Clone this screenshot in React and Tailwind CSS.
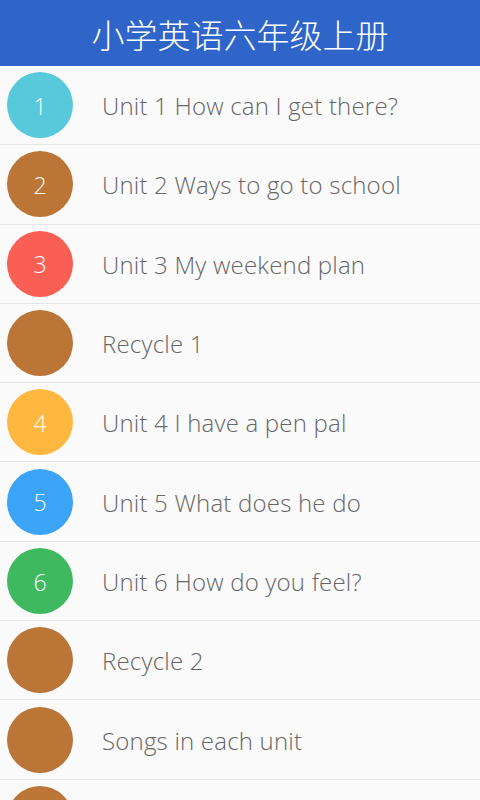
import React from "react";

const items = [
  { n: "1", t: "Unit 1 How can I get there?", c: "bg-[#57c9da]" },
  { n: "2", t: "Unit 2 Ways to go to school", c: "bg-[#bb7536]" },
  { n: "3", t: "Unit 3 My weekend plan", c: "bg-[#fa5f55]" },
  { n: "", t: "Recycle 1", c: "bg-[#bb7536]" },
  { n: "4", t: "Unit 4 I have a pen pal", c: "bg-[#feb840]" },
  { n: "5", t: "Unit 5 What does he do", c: "bg-[#3ca4f6]" },
  { n: "6", t: "Unit 6 How do you feel?", c: "bg-[#3fb95f]" },
  { n: "", t: "Recycle 2", c: "bg-[#bb7536]" },
  { n: "", t: "Songs in each unit", c: "bg-[#bb7536]" },
  { n: "", t: "", c: "bg-[#bb7536]" },
];

export default function App() {
  return (
    <div className="w-[480px] h-[800px] overflow-hidden bg-[#fafafa]" style={{ fontFamily: '"Open Sans", "Noto Sans CJK SC", sans-serif' }}>
      <div className="h-[66px] bg-[#2f64c8] flex items-center justify-center">
        <span className="text-white text-[33px] leading-none pt-[2px]" style={{ fontFamily: '"Noto Sans CJK SC", sans-serif', fontWeight: 300 }}>
          小学英语六年级上册
        </span>
      </div>
      {items.map((it, i) => (
        <div key={i} className="h-[79.3px] box-border border-b border-[#e6e6e6] flex items-center">
          <div className={`ml-[7px] w-[66px] h-[66px] rounded-full ${it.c} flex items-center justify-center text-white text-[23px] font-light pt-[2px]`}>
            {it.n}
          </div>
          <div className="ml-[29px] text-[24px] tracking-[0.2px] text-[#666666] font-light pt-[2px]">{it.t}</div>
        </div>
      ))}
    </div>
  );
}
